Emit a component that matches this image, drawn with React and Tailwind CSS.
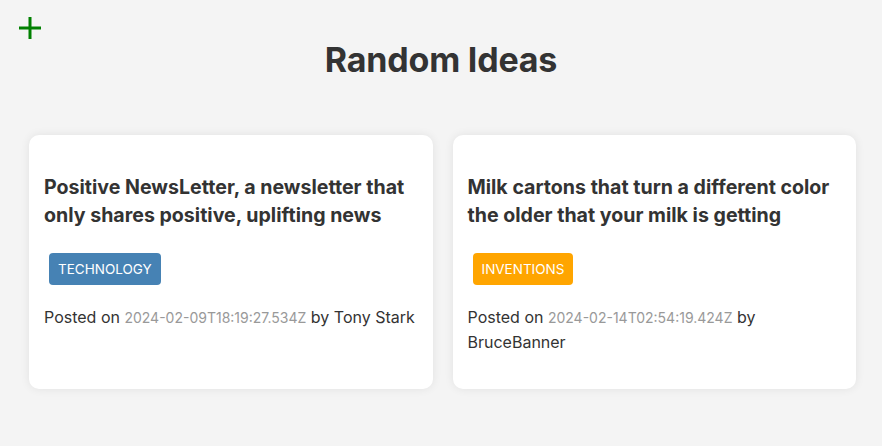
import React from "react";

const ideas = [
  {
    id: 1,
    text: "Positive NewsLetter, a newsletter that only shares positive, uplifting news",
    tag: "technology",
    tagClass: "bg-[#4682b4]",
    date: "2024-02-09T18:19:27.534Z",
    username: "Tony Stark",
  },
  {
    id: 2,
    text: "Milk cartons that turn a different color the older that your milk is getting",
    tag: "inventions",
    tagClass: "bg-[#ffa500]",
    date: "2024-02-14T02:54:19.424Z",
    username: "BruceBanner",
  },
];

function PlusIcon() {
  return (
    <svg width="24" height="24" viewBox="0 0 24 24" aria-hidden="true">
      <path d="M12 1v22M1 12h22" stroke="#008000" strokeWidth="3" fill="none" />
    </svg>
  );
}

export default function App() {
  return (
    <div className="min-h-[446px] bg-[#f4f4f4] text-[#333] font-['Inter',sans-serif]">
      <header className="relative pt-[38px] pb-[53px]">
        <button className="absolute left-[18px] top-[16px]" aria-label="Add idea">
          <PlusIcon />
        </button>
        <h1 className="text-center text-[34px] font-bold leading-[44px] tracking-[-0.2px]">
          Random Ideas
        </h1>
      </header>

      <main className="grid grid-cols-2 gap-5 pl-[29px] pr-[26px]">
        {ideas.map((idea) => (
          <article
            key={idea.id}
            className="h-[254px] rounded-[10px] bg-white px-[15px] pt-[38px] shadow-[0_0_10px_rgba(0,0,0,0.08)]"
          >
            <h3 className="text-[19.6px] font-bold leading-[28px]">{idea.text}</h3>
            <p
              className={`ml-[5px] mt-[24px] inline-block rounded-[4px] px-[9px] py-[6px] text-[13.5px] uppercase leading-[20px] text-white ${idea.tagClass}`}
            >
              {idea.tag}
            </p>
            <p className="mt-[20px] text-[16px] leading-[24px]">
              Posted on <span className="text-[14px] text-[#999]">{idea.date}</span> by{" "}
              {idea.username}
            </p>
          </article>
        ))}
      </main>
    </div>
  );
}
